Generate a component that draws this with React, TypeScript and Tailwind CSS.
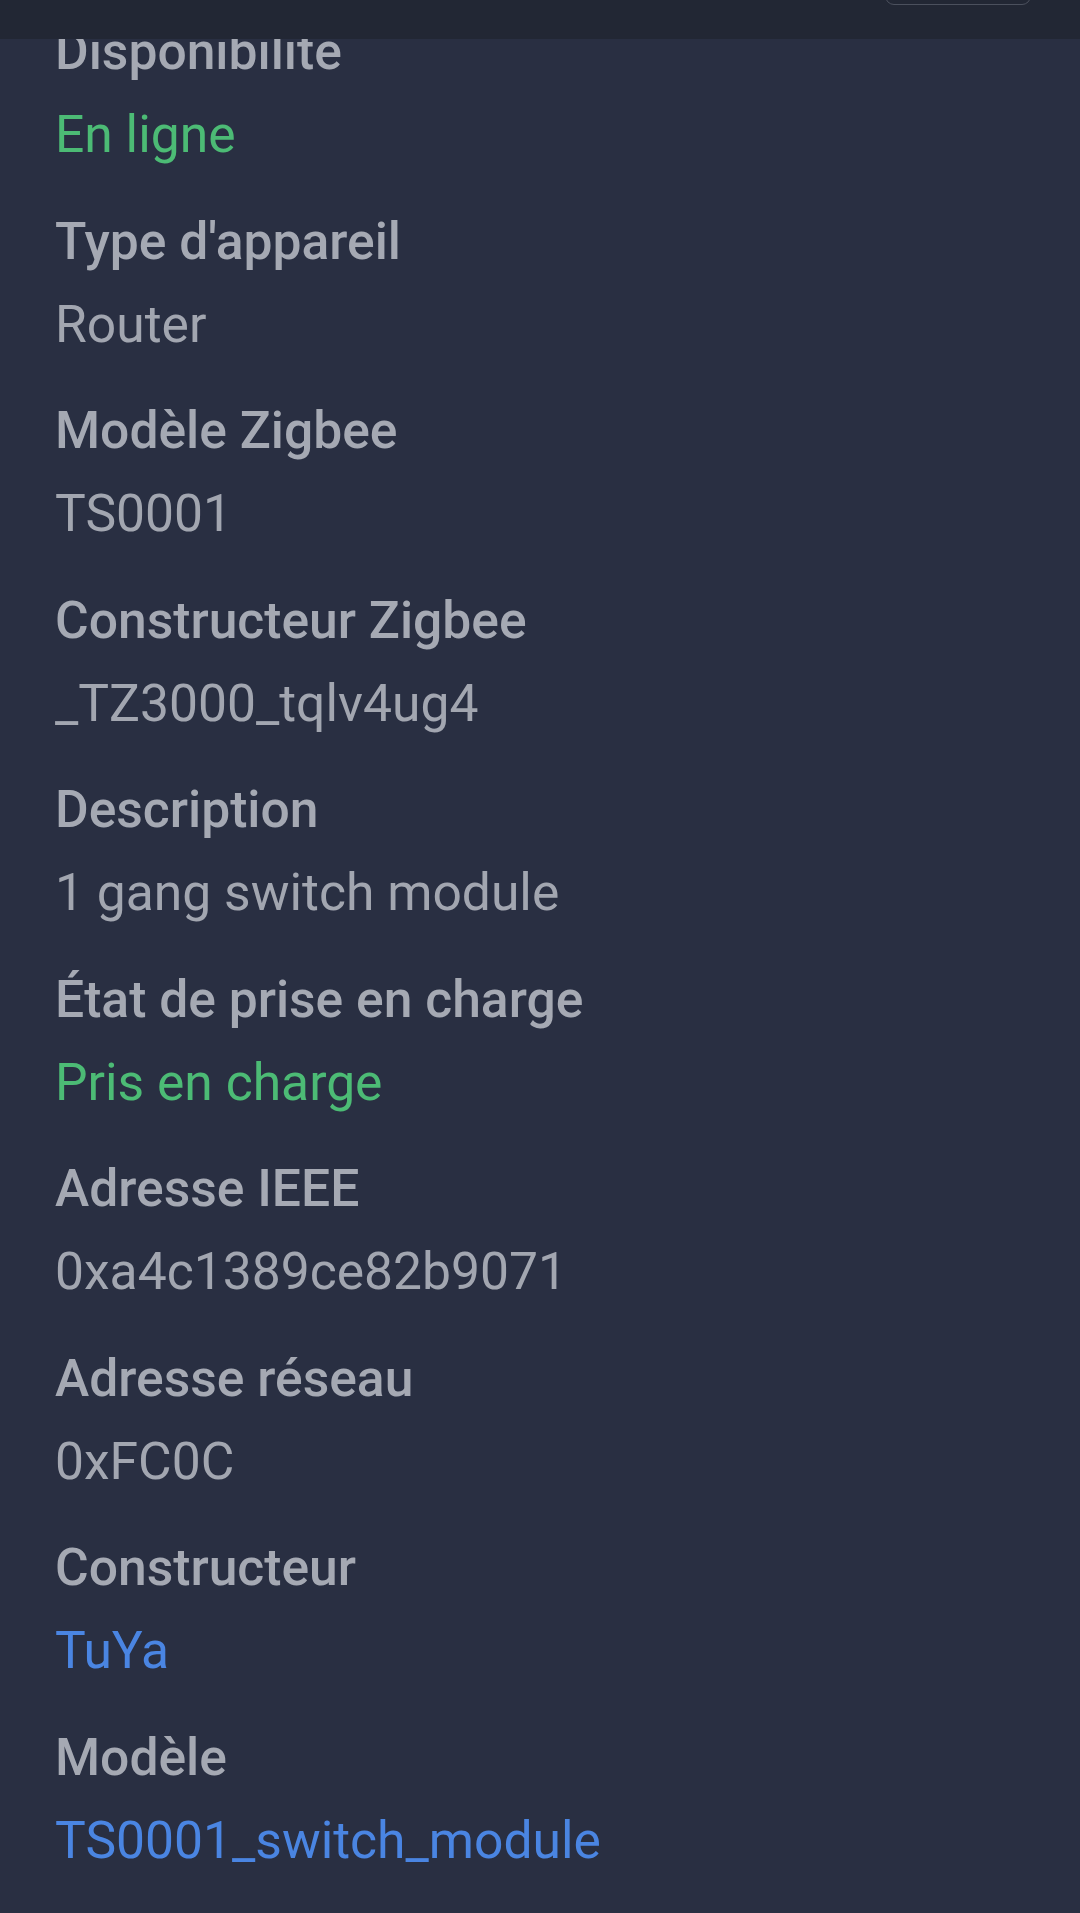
import React from "react";

type Item = { label: string; value: string; tone?: "green" | "blue" | "gray" };

const items: Item[] = [
  { label: "Disponibilité", value: "En ligne", tone: "green" },
  { label: "Type d'appareil", value: "Router" },
  { label: "Modèle Zigbee", value: "TS0001" },
  { label: "Constructeur Zigbee", value: "_TZ3000_tqlv4ug4" },
  { label: "Description", value: "1 gang switch module" },
  { label: "État de prise en charge", value: "Pris en charge", tone: "green" },
  { label: "Adresse IEEE", value: "0xa4c1389ce82b9071" },
  { label: "Adresse réseau", value: "0xFC0C" },
  { label: "Constructeur", value: "TuYa", tone: "blue" },
  { label: "Modèle", value: "TS0001_switch_module", tone: "blue" },
];

function toneClass(t?: Item["tone"]) {
  if (t === "green") return "text-[#4cbb75]";
  if (t === "blue") return "text-[#4a85e2]";
  return "text-[#a2a6b0]";
}

export default function App() {
  return (
    <div
      className="relative h-[1913px] w-[1080px] overflow-hidden bg-[#292f42]"
      style={{ fontFamily: "Roboto, 'Noto Sans', sans-serif" }}
    >
      <div className="flex flex-col gap-[23.5px] pl-[55px] pt-[10px]">
        {items.map((it) => (
          <div key={it.label} className="flex flex-col">
            <div className="text-[51.6px] leading-[83px] font-medium text-[#a5a9b3]">{it.label}</div>
            <div className={`text-[51.6px] leading-[83px] font-normal ${toneClass(it.tone)}`}>{it.value}</div>
          </div>
        ))}
      </div>
      <div className="absolute left-0 top-0 h-[39px] w-full bg-[#222734]">
        <div className="absolute left-[885px] top-[-40px] h-[45px] w-[146px] rounded-[9px] border-[1.5px] border-[#4b505d]" />
      </div>
    </div>
  );
}
